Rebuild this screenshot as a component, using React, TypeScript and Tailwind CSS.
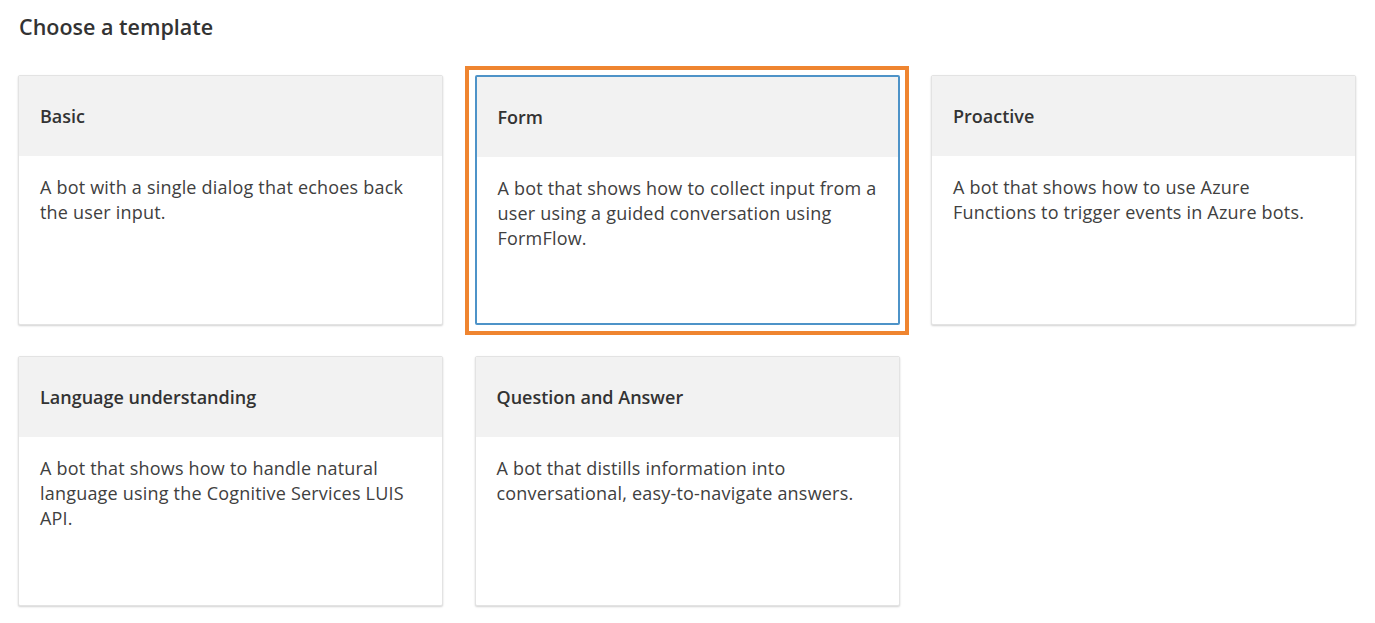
import React from "react";

type T = { title: string; desc: string; selected?: boolean };

const cards: T[] = [
  { title: "Basic", desc: "A bot with a single dialog that echoes back the user input." },
  { title: "Form", desc: "A bot that shows how to collect input from a user using a guided conversation using FormFlow.", selected: true },
  { title: "Proactive", desc: "A bot that shows how to use Azure Functions to trigger events in Azure bots." },
  { title: "Language understanding", desc: "A bot that shows how to handle natural language using the Cognitive Services LUIS API." },
  { title: "Question and Answer", desc: "A bot that distills information into conversational, easy-to-navigate answers." },
];

function Card({ c }: { c: T }) {
  return (
    <div className="relative h-[250px] w-[425px]">
      {c.selected && (
        <div className="pointer-events-none absolute -left-[10px] -top-[9px] -right-[9px] -bottom-[10px] border-[4.5px] border-[#ef8530]" />
      )}
      <div
        className={
          "flex h-full w-full flex-col overflow-hidden rounded-[2px] bg-white " +
          (c.selected
            ? "border-[2px] border-[#4e93c8]"
            : "border border-[#e3e3e3] shadow-[0_1px_2px_rgba(0,0,0,0.18)]")
        }
      >
        <div className="flex h-[80px] shrink-0 items-center bg-[#f2f2f2] px-[21px] text-[18px] font-semibold text-[#333333]">
          {c.title}
        </div>
        <div
          className={
            "pl-[21px] pt-[19px] text-[18px] leading-[25px] tracking-[0.2px] text-[#404040] " +
            (c.selected ? "pr-[10px]" : "pr-[21px]")
          }
        >
          {c.desc}
        </div>
      </div>
    </div>
  );
}

export default function App() {
  return (
    <div
      className="min-h-[623px] w-[1375px] bg-white pl-[18px] pt-[12px]"
      style={{ fontFamily: '"Open Sans", "Noto Sans", sans-serif' }}
    >
      <h1 className="pl-[1px] text-[21.5px] font-semibold leading-[30px] text-[#333333]">Choose a template</h1>
      <div className="mt-[33px] grid grid-cols-[425px_425px_425px] gap-x-[31.5px] gap-y-[31px]">
        {cards.map((c) => (
          <Card key={c.title} c={c} />
        ))}
      </div>
    </div>
  );
}
